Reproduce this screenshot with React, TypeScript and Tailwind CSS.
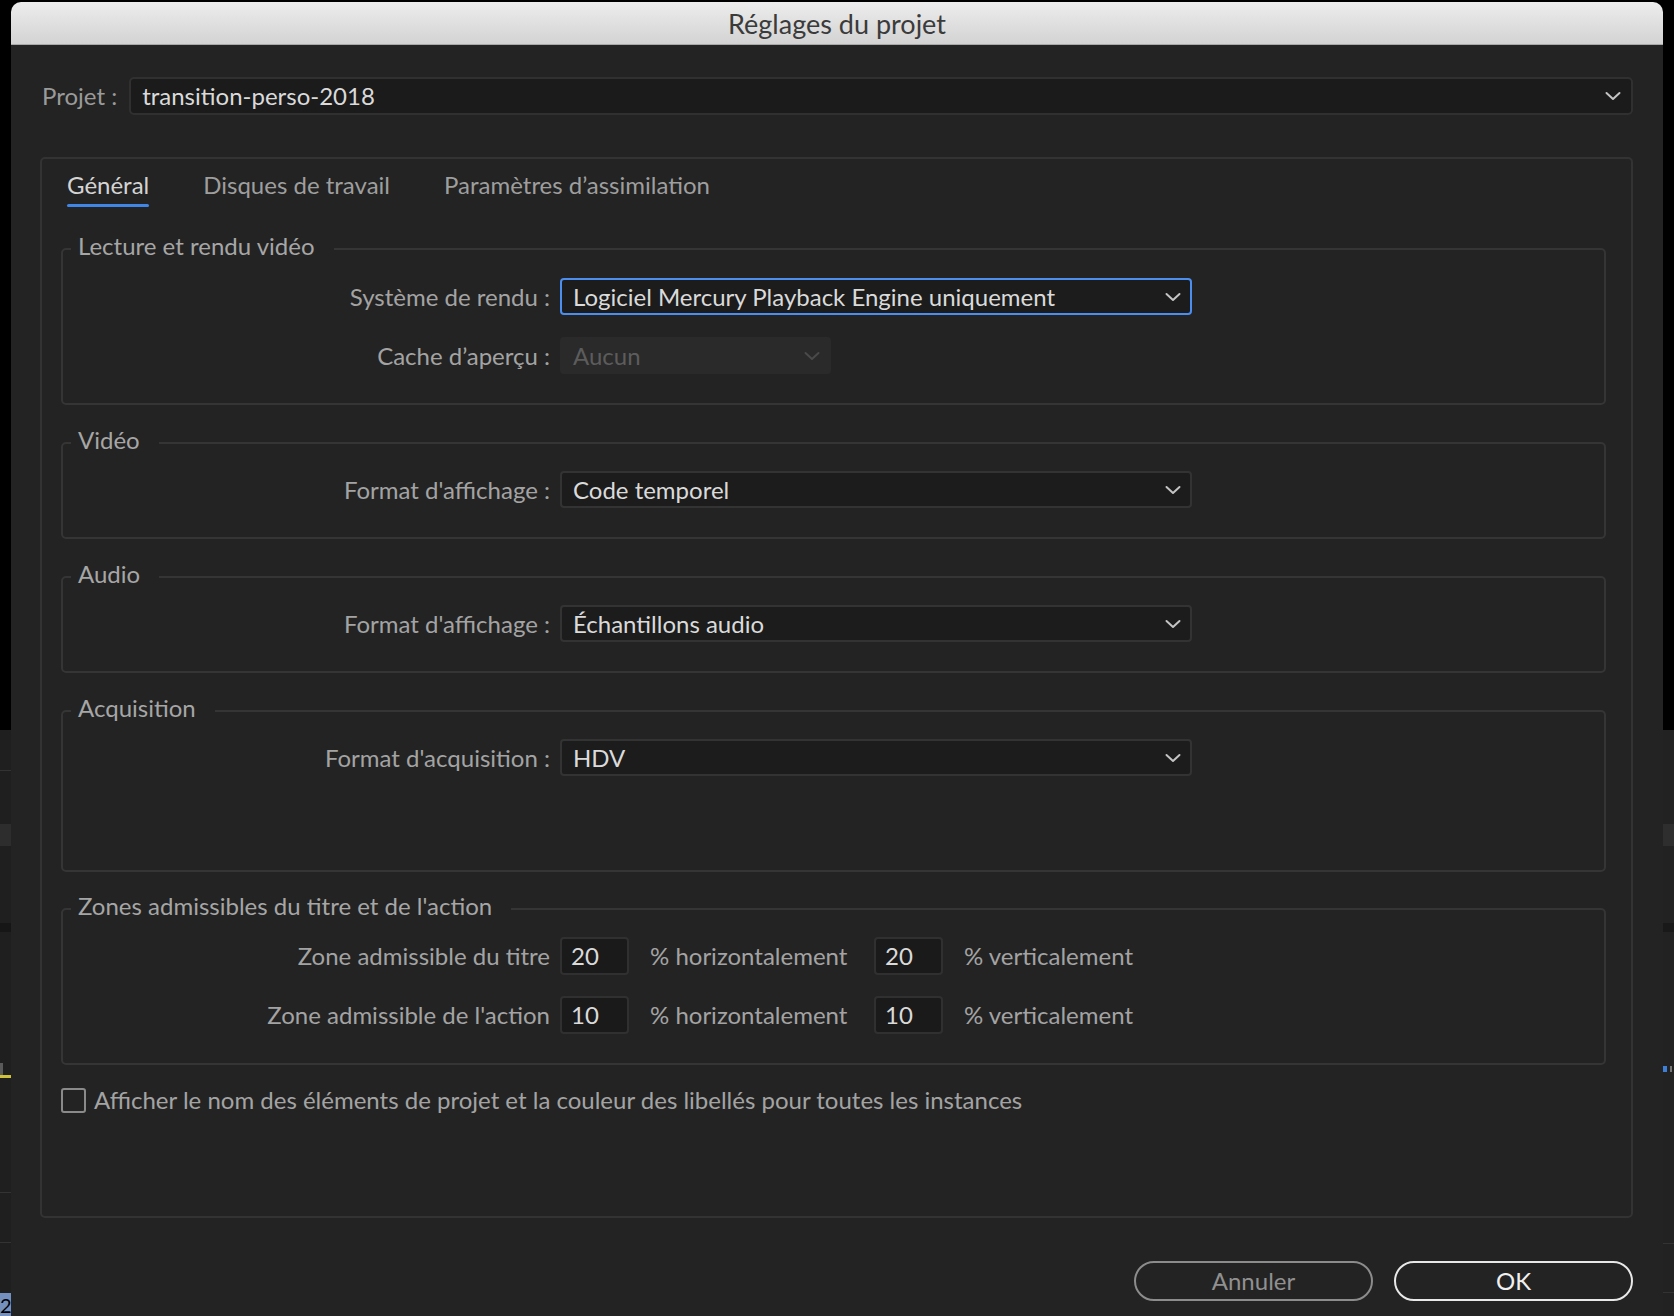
import React from "react";

function Chevron({ color = "#c4c4c4" }: { color?: string }) {
  return (
    <svg width="16" height="10" viewBox="0 0 16 10" fill="none">
      <path d="M1.5 2 L8 8 L14.5 2" stroke={color} strokeWidth="2" strokeLinecap="round" strokeLinejoin="round" />
    </svg>
  );
}

function Select({ value, focused }: { value: string; focused?: boolean }) {
  return (
    <div
      className={
        focused
          ? "ml-[10px] flex h-[37px] w-[632px] items-center justify-between rounded-[4px] border-2 border-[#4b8ef0] bg-[#1c1c1c] pl-[11px] pr-[9px] text-[#dadada]"
          : "ml-[10px] flex h-[37px] w-[632px] items-center justify-between rounded-[4px] border-2 border-[#333333] bg-[#1c1c1c] pl-[11px] pr-[9px] text-[#dadada]"
      }
    >
      <span className="whitespace-nowrap">{value}</span>
      <Chevron />
    </div>
  );
}

function Label({ children }: { children: React.ReactNode }) {
  return <div className="w-[487px] whitespace-nowrap text-right text-[#a3a3a3]">{children}</div>;
}

function Legend({ children }: { children: React.ReactNode }) {
  return (
    <legend className="ml-[8px] pl-[7px] pr-[19px] text-[24px] leading-[28px] text-[#a6a6a6] whitespace-nowrap">
      <span className="relative top-[-3px]">{children}</span>
    </legend>
  );
}

function NumBox({ value }: { value: string }) {
  return (
    <div className="flex h-[38px] w-[69px] items-center rounded-[4px] border-2 border-[#303030] bg-[#1a1a1a] pl-[9px] text-[#dadada]">
      {value}
    </div>
  );
}

function LeftStrip() {
  return (
    <div className="flex h-full w-[11px] shrink-0 flex-col">
      <div className="h-[730px] bg-black" />
      <div className="h-[40px] bg-[#1f1f1f]" />
      <div className="h-[1px] bg-[#333333]" />
      <div className="h-[53px] bg-[#1f1f1f]" />
      <div className="h-[22px] bg-[#2d2d2d]" />
      <div className="h-[77px] bg-[#1f1f1f]" />
      <div className="h-[9px] bg-[#161616]" />
      <div className="h-[131px] bg-[#1f1f1f]" />
      <div className="flex h-[12px] bg-[#1f1f1f]">
        <div className="h-full w-[3px] bg-[#5a5a5a]" />
      </div>
      <div className="h-[3px] bg-[#cfc23a]" />
      <div className="h-[114px] bg-[#1f1f1f]" />
      <div className="h-[1px] bg-[#333333]" />
      <div className="h-[49px] bg-[#1f1f1f]" />
      <div className="h-[1px] bg-[#333333]" />
      <div className="h-[50px] bg-[#1f1f1f]" />
      <div className="flex-1 overflow-hidden bg-[#7390c0] text-[20px] leading-[24px] text-black">2</div>
    </div>
  );
}

function RightStrip() {
  return (
    <div className="flex h-full w-[11px] shrink-0 flex-col">
      <div className="h-[730px] bg-black" />
      <div className="h-[94px] bg-[#222222]" />
      <div className="h-[22px] bg-[#2e2e2e]" />
      <div className="h-[77px] bg-[#222222]" />
      <div className="h-[9px] bg-[#191919]" />
      <div className="h-[134px] bg-[#222222]" />
      <div className="flex h-[6px] bg-[#222222]">
        <div className="h-full w-[4px] bg-[#3d7fd8]" />
        <div className="ml-[3px] h-full w-[2px] bg-[#777777]" />
      </div>
      <div className="h-[171px] bg-[#222222]" />
      <div className="h-[1px] bg-[#333333]" />
      <div className="h-[48px] bg-[#222222]" />
      <div className="h-[1px] bg-[#333333]" />
      <div className="flex-1 bg-[#222222]" />
    </div>
  );
}

export default function App() {
  return (
    <div className="flex h-[1316px] w-[1674px] overflow-hidden bg-black font-[Lato,sans-serif] text-[24px] leading-[28px]">
      <LeftStrip />
      <div className="flex w-[1652px] shrink-0 flex-col pt-[2px]">
        <div className="flex h-[43px] shrink-0 items-center justify-center rounded-t-[10px] border-b border-[#a9a9a9] bg-linear-to-b from-[#ededed] to-[#d3d3d3] pt-[2px] text-[27px] text-[#3b3b3b]">
          Réglages du projet
        </div>
        <div className="flex flex-1 flex-col bg-[#232323] pl-[29px] pr-[30px] pt-[32px]">
          {/* Projet row */}
          <div className="flex h-[38px] items-center pl-[2px]">
            <span className="text-[#9a9a9a]">Projet :</span>
            <div className="ml-[12px] flex h-[38px] flex-1 items-center justify-between rounded-[5px] border-2 border-[#303030] bg-[#1b1b1b] pl-[11px] pr-[10px] text-[#dadada]">
              <span>transition-perso-2018</span>
              <Chevron />
            </div>
          </div>

          {/* Tab panel */}
          <div className="mt-[42px] flex h-[1061px] flex-col rounded-[5px] border-2 border-[#333333] pt-[12px]">
            <div className="flex gap-[54px] pl-[25px]">
              <div className="flex flex-col">
                <span className="text-[#d4d4d4]">Général</span>
                <div className="mt-[5px] h-[3px] rounded-full bg-[#3f86e6]" />
              </div>
              <div className="flex flex-col">
                <span className="text-[#9e9e9e]">Disques de travail</span>
                <div className="mt-[5px] h-[3px]" />
              </div>
              <div className="flex flex-col">
                <span className="text-[#9e9e9e]">Paramètres d’assimilation</span>
                <div className="mt-[5px] h-[3px]" />
              </div>
            </div>

            {/* Fieldset 1 */}
            <fieldset className="ml-[19px] mr-[25px] mt-[28px] rounded-[5px] border-2 border-[#353535] pb-[29px] pt-[15px]">
              <Legend>Lecture et rendu vidéo</Legend>
              <div className="flex h-[37px] items-center">
                <Label>Système de rendu :</Label>
                <Select value="Logiciel Mercury Playback Engine uniquement" focused />
              </div>
              <div className="mt-[22px] flex h-[37px] items-center">
                <Label>Cache d’aperçu :</Label>
                <div className="ml-[10px] flex h-[37px] w-[271px] items-center justify-between rounded-[4px] bg-[#2a2a2a] pl-[13px] pr-[11px] text-[#5c5c5c]">
                  <span>Aucun</span>
                  <Chevron color="#4a4a4a" />
                </div>
              </div>
            </fieldset>

            {/* Fieldset 2 */}
            <fieldset className="ml-[19px] mr-[25px] mt-[24px] rounded-[5px] border-2 border-[#353535] pb-[29px] pt-[14px]">
              <Legend>Vidéo</Legend>
              <div className="flex h-[37px] items-center">
                <Label>Format d'affichage :</Label>
                <Select value="Code temporel" />
              </div>
            </fieldset>

            {/* Fieldset 3 */}
            <fieldset className="ml-[19px] mr-[25px] mt-[24px] rounded-[5px] border-2 border-[#353535] pb-[29px] pt-[14px]">
              <Legend>Audio</Legend>
              <div className="flex h-[37px] items-center">
                <Label>Format d'affichage :</Label>
                <Select value="Échantillons audio" />
              </div>
            </fieldset>

            {/* Fieldset 4 */}
            <fieldset className="ml-[19px] mr-[25px] mt-[24px] rounded-[5px] border-2 border-[#353535] pb-[94px] pt-[14px]">
              <Legend>Acquisition</Legend>
              <div className="flex h-[37px] items-center">
                <Label>Format d'acquisition :</Label>
                <Select value="HDV" />
              </div>
            </fieldset>

            {/* Fieldset 5 */}
            <fieldset className="ml-[19px] mr-[25px] mt-[23px] rounded-[5px] border-2 border-[#353535] pb-[29px] pt-[14px]">
              <Legend>Zones admissibles du titre et de l'action</Legend>
              <div className="flex h-[38px] items-center">
                <Label>Zone admissible du titre</Label>
                <div className="ml-[10px] flex items-center text-[#a3a3a3]">
                  <NumBox value="20" />
                  <span className="ml-[21px] w-[224px] whitespace-nowrap">% horizontalement</span>
                  <NumBox value="20" />
                  <span className="ml-[21px] whitespace-nowrap">% verticalement</span>
                </div>
              </div>
              <div className="mt-[21px] flex h-[38px] items-center">
                <Label>Zone admissible de l'action</Label>
                <div className="ml-[10px] flex items-center text-[#a3a3a3]">
                  <NumBox value="10" />
                  <span className="ml-[21px] w-[224px] whitespace-nowrap">% horizontalement</span>
                  <NumBox value="10" />
                  <span className="ml-[21px] whitespace-nowrap">% verticalement</span>
                </div>
              </div>
            </fieldset>

            {/* Checkbox */}
            <div className="ml-[19px] mt-[21px] flex items-center">
              <div className="h-[25px] w-[25px] rounded-[3px] border-2 border-[#8a8a8a]" />
              <span className="ml-[8px] text-[#a3a3a3]">
                Afficher le nom des éléments de projet et la couleur des libellés pour toutes les instances
              </span>
            </div>
          </div>

          {/* Buttons */}
          <div className="mt-[43px] flex justify-end gap-[21px]">
            <button className="flex h-[40px] w-[239px] items-center justify-center rounded-full border-2 border-[#8c8c8c] text-[#909090]">
              Annuler
            </button>
            <button className="flex h-[40px] w-[239px] items-center justify-center rounded-full border-2 border-[#e8e8e8] text-[#f0f0f0]">
              OK
            </button>
          </div>
        </div>
      </div>
      <RightStrip />
    </div>
  );
}
